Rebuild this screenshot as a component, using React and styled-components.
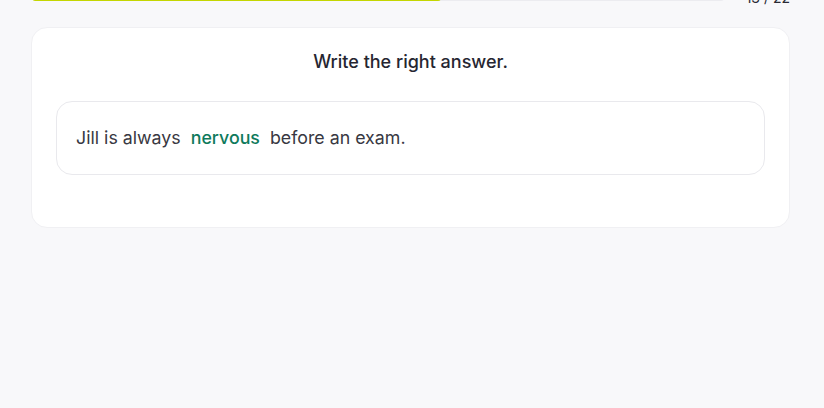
import React from "react";
import styled, { createGlobalStyle } from "styled-components";

const GlobalStyle = createGlobalStyle`
  html, body {
    margin: 0;
    padding: 0;
    background: #f8f8fa;
    font-family: Inter, "Noto Sans", sans-serif;
  }
`;

const Page = styled.div`
  min-height: 408px;
  padding: 0 34px 0 31px;
  box-sizing: border-box;
  overflow: hidden;
`;

const Header = styled.div`
  display: flex;
  align-items: center;
  gap: 22px;
  height: 16px;
  margin-top: -10px;
`;

const Track = styled.div`
  flex: 1;
  height: 6px;
  margin-left: 1px;
  border-radius: 3px;
  background: #ececf0;
  overflow: hidden;
`;

const Fill = styled.div`
  height: 100%;
  background: #c4d600;
  border-radius: 3px;
`;

const Counter = styled.span`
  font-size: 14px;
  line-height: 16px;
  color: #2a2a35;
  white-space: nowrap;
`;

const Card = styled.div`
  margin-top: 21px;
  background: #fff;
  border: 1px solid #f0f0f3;
  border-radius: 16px;
  padding: 22px 24px 52px;
`;

const Title = styled.h2`
  margin: 0 0 27px;
  text-align: center;
  font-size: 18px;
  line-height: 24px;
  font-weight: 500;
  color: #262631;
`;

const Sentence = styled.div`
  border: 1px solid #e9e9ed;
  border-radius: 16px;
  padding: 23px 19px;
  font-size: 17.8px;
  line-height: 26px;
  color: #383842;
`;

const Answer = styled.span`
  margin: 0 5px;
  font-weight: 500;
  color: #0e7a5c;
`;

export default function App() {
  const current = 13;
  const total = 22;
  return (
    <>
      <GlobalStyle />
      <Page>
        <Header>
          <Track>
            <Fill style={{ width: `${(current / total) * 100}%` }} />
          </Track>
          <Counter>
            {current} / {total}
          </Counter>
        </Header>
        <Card>
          <Title>Write the right answer.</Title>
          <Sentence>
            Jill is always <Answer>nervous</Answer> before an exam.
          </Sentence>
        </Card>
      </Page>
    </>
  );
}
